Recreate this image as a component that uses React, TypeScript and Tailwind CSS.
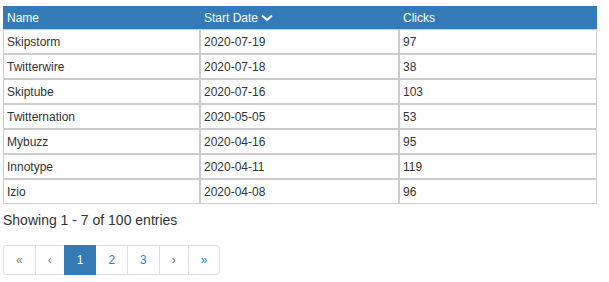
const rows = [
  { name: "Skipstorm", date: "2020-07-19", clicks: 97 },
  { name: "Twitterwire", date: "2020-07-18", clicks: 38 },
  { name: "Skiptube", date: "2020-07-16", clicks: 103 },
  { name: "Twitternation", date: "2020-05-05", clicks: 53 },
  { name: "Mybuzz", date: "2020-04-16", clicks: 95 },
  { name: "Innotype", date: "2020-04-11", clicks: 119 },
  { name: "Izio", date: "2020-04-08", clicks: 96 },
];

const pages = [
  { label: "«", disabled: true },
  { label: "‹", disabled: true },
  { label: "1", active: true },
  { label: "2" },
  { label: "3" },
  { label: "›" },
  { label: "»" },
];

const ChevronDown = () => (
  <svg width="12" height="8" viewBox="0 0 12 8" className="ml-[3px] inline-block">
    <path d="M1 1.5 L6 6 L11 1.5" fill="none" stroke="white" strokeWidth="2" />
  </svg>
);

export default function App() {
  return (
    <div
      className="w-[609px] h-[282px] bg-white text-[#333] pl-[3px] pt-[6px]"
      style={{ fontFamily: '"Liberation Sans", Arial, sans-serif' }}
    >
      <table className="w-[594px] border-separate border-spacing-0 table-fixed text-xs">
        <thead>
          <tr className="bg-[#337ab7] text-white h-[23px]">
            <th className="text-left font-normal px-1 w-[197px]">Name</th>
            <th className="text-left font-normal px-1 w-[199px]">
              <span className="inline-flex items-center">
                Start Date
                <ChevronDown />
              </span>
            </th>
            <th className="text-left font-normal px-1">Clicks</th>
          </tr>
        </thead>
        <tbody>
          {rows.map((r) => (
            <tr key={r.name} className="h-[25px]">
              <td className="border border-[#ccc] px-[3px] py-0">{r.name}</td>
              <td className="border border-[#ccc] px-[3px] py-0">{r.date}</td>
              <td className="border border-[#ccc] px-[3px] py-0">{r.clicks}</td>
            </tr>
          ))}
        </tbody>
      </table>

      <div className="mt-[6px] text-sm leading-5">Showing 1 - 7 of 100 entries</div>

      <ul className="mt-[15px] flex">
        {pages.map((p, i) => (
          <li
            key={i}
            className={
              "px-3 py-[5px] text-xs leading-[18px] border " +
              (i > 0 ? "-ml-px " : "") +
              (i === 0 ? "rounded-l-[3px] " : "") +
              (i === pages.length - 1 ? "rounded-r-[3px] " : "") +
              (p.active
                ? "bg-[#337ab7] border-[#337ab7] text-white relative z-10"
                : p.disabled
                ? "bg-white border-[#ddd] text-[#777]"
                : "bg-white border-[#ddd] text-[#337ab7]")
            }
          >
            {p.label}
          </li>
        ))}
      </ul>
    </div>
  );
}
